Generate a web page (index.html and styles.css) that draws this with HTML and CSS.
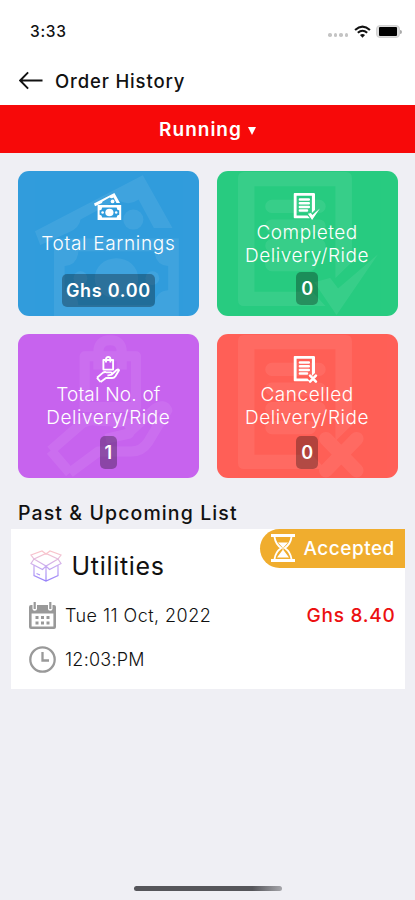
FILE: index.html
```html
<!DOCTYPE html>
<html lang="en">
  <head>
    <title>Order History</title>
    <meta charset="utf-8">
    <meta name="viewport" content="width=device-width, initial-scale=1">
    <link rel="stylesheet" href="styles.css">
  </head>
  <body>

  <!-- shared icons -->
  <svg class="sprite" aria-hidden="true">
    <symbol id="money" viewBox="0 0 28 27">
      <path fill-rule="evenodd" d="M0 10.6 20.4 0 26 10H22.5L19.6 4.6Q17.6 6 15.6 4.6L8.6 8.4Q8.4 10 6.4 10.8L1 13.2Z"/>
      <circle cx="18.6" cy="8.4" r="1.9"/>
      <path fill-rule="evenodd" d="M3.6 12H27.2V27H3.6ZM8.2 14.4Q8 17 5.6 17.2V21.8Q8 22 8.2 24.6H22.6Q22.8 22 25.2 21.8V17.2Q22.8 17 22.6 14.4Z"/>
      <ellipse cx="15.4" cy="19.5" rx="4.1" ry="3.8"/>
      <circle cx="8.6" cy="19.5" r="1.3"/><circle cx="22.2" cy="19.5" r="1.3"/>
    </symbol>
    <symbol id="sheet" viewBox="0 0 27 27">
      <path fill-rule="evenodd" d="M1.2 0H20.3Q21.5 0 21.5 1.2V17L18.4 20V2.7H3.1V22.6H14L16.5 25.3H1.2Q0 25.3 0 24.1V1.2Q0 0 1.2 0Z"/>
      <path class="rule" d="M6.4 6.5H15.3M6.4 10.2H15.3M6.4 13.9H15.3M6.4 17.5H13.5"/>
    </symbol>
    <symbol id="done" viewBox="0 0 27 27">
      <use href="#sheet"/>
      <path d="M14.4 20.8 17.4 20 18.9 22 26.4 15.6 18.6 27Z"/>
    </symbol>
    <symbol id="cancel" viewBox="0 0 27 27">
      <use href="#sheet"/>
      <path class="cross" d="M16.6 19.6 22.4 25.6M22.4 19.6 16.6 25.6"/>
    </symbol>
    <symbol id="hand" viewBox="0 0 24 27">
      <g class="line">
        <path d="M7.4 4H17.1V13.6H7.4ZM10 6.5V3.2Q10 1 12.2 1T14.4 3.2V6.5"/>
        <path d="M1 21.8 7 16.6Q8.4 15.8 10 16.2L14.8 16.4Q16.6 16.8 15.8 18.6L11.4 19.6M16 18.2 20.6 14Q22.4 12.8 23 14.2L19.4 20.2Q18.2 22 16.2 22H10L4.6 26"/>
        <path d="M1 21.8 4.6 26"/>
      </g>
    </symbol>
  </svg>

  <div class="status">
    <span class="clock">3:33</span>
    <span class="dots"><i></i><i></i><i></i><i></i></span>
    <svg class="wifi" viewBox="0 0 16 12">
      <path d="M1 4.6Q8-1.6 15 4.6M3.6 7.2Q8 3.4 12.4 7.2"/>
      <path class="fill" d="M5.6 9.3Q8 7.5 10.4 9.3L8 11.8Z"/>
    </svg>
    <span class="battery"><b></b></span>
  </div>

  <div class="topbar">
    <svg class="back" viewBox="0 0 25 19"><path d="M24.5 9.5H1.2M9.5 1 1.2 9.5 9.5 18"/></svg>
    <h1>Order History</h1>
  </div>

  <div class="filter"><span>Running</span><i class="caret"></i></div>

  <div class="cards">
    <div class="card earnings">
      <svg class="mark"><use href="#money"/></svg>
      <svg class="icon"><use href="#money"/></svg>
      <p>Total Earnings</p>
      <b>Ghs 0.00</b>
    </div>
    <div class="card completed">
      <svg class="mark"><use href="#done"/></svg>
      <svg class="icon"><use href="#done"/></svg>
      <p>Completed<br>Delivery/Ride</p>
      <b>0</b>
    </div>
    <div class="card total">
      <svg class="mark"><use href="#hand"/></svg>
      <svg class="icon"><use href="#hand"/></svg>
      <p><span class="tight">Total No. of</span><br>Delivery/Ride</p>
      <b>1</b>
    </div>
    <div class="card cancelled">
      <svg class="mark"><use href="#cancel"/></svg>
      <svg class="icon"><use href="#cancel"/></svg>
      <p>Cancelled<br>Delivery/Ride</p>
      <b>0</b>
    </div>
  </div>

  <h2>Past &amp; Upcoming List</h2>

  <div class="order">
    <div class="head">
      <svg class="box" viewBox="0 0 32 32">
        <defs>
          <linearGradient id="tint" gradientUnits="userSpaceOnUse" x1="0" y1="0" x2="0" y2="32">
            <stop offset="0.1" stop-color="#f9c4cb"/>
            <stop offset="0.5" stop-color="#c9adf0"/>
            <stop offset="1" stop-color="#9580fa"/>
          </linearGradient>
        </defs>
        <path d="M4 9 16 16 28 9 16 3.5ZM4 9 1 5 12 1 16 4 20 1 31 5 28 9M4 9 1 13.5 12.5 19.5 16 16 19.5 19.5 31 13.5 28 9M4 15.5V25.5L16 31 28 25.5V15.5M16 16V31M6.5 23.5 10 25"/>
      </svg>
      <span class="name">Utilities</span>
      <div class="state">
        <svg viewBox="0 0 24 28">
          <path d="M0 0H24V3H0ZM0 25H24V28H0Z"/>
          <path class="glass" d="M3.5 3Q4.5 10 10.2 14 4.5 18 3.5 25M20.5 3Q19.5 10 13.8 14 19.5 18 20.5 25"/>
          <path d="M7 8.5H17L12.4 13.6V16L18 23.5H6L11.6 16V13.6Z"/>
        </svg>
        <span>Accepted</span>
      </div>
    </div>
    <div class="row">
      <svg class="small" viewBox="0 0 27 27">
        <path fill-rule="evenodd" d="M2 3H3.5V7Q3.5 8.8 5.7 8.8T8 7V3H19V7Q19 8.8 21.2 8.8T23.5 7V3H25Q27 3 27 5V25Q27 27 25 27H2Q0 27 0 25V5Q0 3 2 3ZM2.6 11.5V24.4H24.4V11.5Z"/>
        <path d="M4.6 0H6.8V7H4.6ZM20.2 0H22.4V7H20.2ZM6.5 14H9.5V17H6.5ZM12 14H15V17H12ZM17.5 14H20.5V17H17.5ZM6.5 19.5H9.5V22.5H6.5ZM12 19.5H15V22.5H12ZM17.5 19.5H20.5V22.5H17.5Z"/>
      </svg>
      <span class="date">Tue 11 Oct, 2022</span>
      <span class="price">Ghs 8.40</span>
    </div>
    <div class="row">
      <svg class="small clockface" viewBox="0 0 27 27"><circle cx="13.5" cy="13.5" r="12.2"/><path d="M13.5 6V14.5H20"/></svg>
      <span class="time">12:03:PM</span>
    </div>
  </div>

  <div class="home"></div>

  </body>
</html>
```
FILE: styles.css
```css
* {
  box-sizing: border-box;
}
body {
  margin: 0;
  height: 900px;
  overflow: hidden;
  display: flex;
  flex-direction: column;
  background: #efeff4;
  color: #111;
  font-family: Inter, "Liberation Sans", sans-serif;
}
h1, h2, p {
  margin: 0;
}
.sprite {
  position: absolute;
  width: 0;
  height: 0;
}

.status {
  height: 56px;
  padding: 6px 12px 0 30px;
  display: flex;
  align-items: center;
  background: #fff;
}
.clock {
  flex: 1;
  font-size: 15.5px;
  font-weight: 500;
  letter-spacing: 0.7px;
}
.dots {
  display: flex;
  gap: 2px;
  margin: 8px 6px 0 0;
}
.dots i {
  width: 3.5px;
  height: 3.5px;
  border-radius: 50%;
  background: #c4c4c4;
}
.wifi {
  width: 17px;
  height: 13px;
  fill: none;
  stroke: #111;
  stroke-width: 2;
}
.wifi .fill {
  fill: #111;
  stroke: none;
}
.battery {
  position: relative;
  width: 24px;
  height: 13px;
  margin: 0 3px 0 5px;
  padding: 1px 2px;
  border: 1px solid #d2d2d2;
  border-radius: 4px;
  background: #ddd;
}
.battery b {
  display: block;
  height: 9px;
  border-radius: 1px;
  background: #000;
}
.battery::after {
  content: "";
  position: absolute;
  right: -3px;
  top: 4px;
  width: 2px;
  height: 4px;
  border-radius: 0 2px 2px 0;
  background: #aaa;
}

.topbar {
  height: 49px;
  padding-left: 19px;
  display: flex;
  align-items: center;
  gap: 12px;
  background: #fff;
}
.back {
  width: 24px;
  height: 19px;
  fill: none;
  stroke: #111;
  stroke-width: 2;
}
h1 {
  font-size: 18.5px;
  font-weight: 500;
  letter-spacing: 0.85px;
  line-height: 22px;
}

.filter {
  height: 48px;
  display: flex;
  align-items: center;
  justify-content: center;
  gap: 6px;
  background: #f70909;
  color: #fff;
  font-size: 19px;
  font-weight: 600;
  letter-spacing: 1px;
}
.caret {
  margin-top: 3px;
  border: 4px solid transparent;
  border-top: 8px solid #fff;
  border-bottom: 0;
}

.cards {
  padding: 18px 17.5px 0 18px;
  display: grid;
  grid-template-columns: 1fr 1fr;
  grid-auto-rows: 144.5px;
  gap: 18px;
}
.card {
  position: relative;
  overflow: hidden;
  padding-top: 22px;
  display: flex;
  flex-direction: column;
  align-items: center;
  border-radius: 11px;
  color: #fff;
  fill: #fff;
}
.earnings { background: #319cdc; }
.completed { background: #28cb80; }
.total { background: #c763ee; }
.cancelled { background: #ff5f57; }

.mark {
  position: absolute;
  left: 21px;
  top: 1px;
  width: 143px;
  height: 143px;
  opacity: 0.07;
}
.earnings .mark {
  left: 17px;
  top: 4px;
  width: 148px;
}
.total .mark {
  left: 27px;
  width: 128px;
}
.icon {
  width: 28px;
  height: 27px;
}
.rule {
  stroke: #fff;
  stroke-width: 2.5;
  stroke-linecap: round;
}
.cross {
  stroke: #fff;
  stroke-width: 2.6;
  stroke-linecap: round;
}
.line {
  fill: none;
  stroke: #fff;
  stroke-width: 1.9;
  stroke-linejoin: round;
}
.card p {
  position: relative;
  margin-top: 0.5px;
  font-size: 19px;
  font-weight: 300;
  letter-spacing: 0.55px;
  line-height: 23px;
  text-align: center;
}
.card p .tight {
  letter-spacing: 0.2px;
}
.card b {
  position: relative;
  height: 33px;
  margin-top: 5px;
  padding: 0 5px;
  border-radius: 5px;
  background: rgba(0, 0, 0, 0.3);
  font-size: 18px;
  font-weight: 600;
  line-height: 33px;
}
.total b, .cancelled b {
  margin-top: 7px;
}
.card.earnings p {
  margin: 12px 0 14px;
  letter-spacing: 0.67px;
}
.earnings b {
  padding: 0 4px;
  letter-spacing: 0.7px;
}

h2 {
  height: 51px;
  padding: 22.5px 0 0 18px;
  font-size: 19.5px;
  font-weight: 500;
  letter-spacing: 1.1px;
  line-height: 24px;
}

.order {
  height: 160px;
  margin: 0 10.5px 0 11px;
  background: #fff;
}
.head {
  display: flex;
  align-items: center;
  height: 64px;
  padding: 10px 0 0 18.5px;
}
.box {
  width: 32px;
  height: 32px;
  fill: none;
  stroke: url(#tint);
  stroke-width: 1.2;
}
.name {
  flex: 1;
  margin-left: 10px;
  font-size: 25px;
  letter-spacing: 0.7px;
}
.state {
  align-self: flex-start;
  display: flex;
  align-items: center;
  width: 145px;
  height: 38.5px;
  margin-top: -10px;
  padding-left: 11px;
  gap: 9px;
  border-radius: 20px 0 0 20px;
  background: #f0ad2e;
  color: #fff;
  fill: #fff;
  font-size: 19px;
  font-weight: 500;
  letter-spacing: 0.5px;
}
.state svg {
  width: 24px;
  height: 28px;
}
.glass {
  fill: none;
  stroke: #fff;
  stroke-width: 1.8;
}
.row {
  display: flex;
  align-items: center;
  height: 44px;
  padding: 0 9px 0 18px;
  font-size: 18px;
  font-weight: 300;
}
.small {
  width: 27px;
  height: 27px;
  margin-right: 9px;
  fill: #999;
}
.clockface {
  fill: none;
  stroke: #999;
  stroke-width: 2.3;
}
.date, .time {
  flex: 1;
}
.date {
  letter-spacing: 0.45px;
}
.time {
  letter-spacing: 0.25px;
}
.price {
  color: #ec1010;
  font-size: 19px;
  font-weight: 500;
  letter-spacing: 0.75px;
}

.home {
  width: 148px;
  height: 5px;
  margin: auto auto 9px 134px;
  border-radius: 3px;
  background: linear-gradient(90deg, #55555a 80%, #a5a5aa);
}
```
